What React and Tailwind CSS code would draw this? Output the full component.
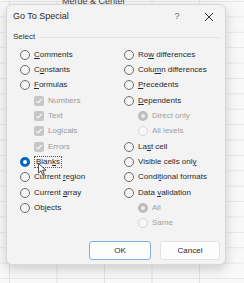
import React from "react";

const Radio = ({ state = "off" }) => {
  if (state === "on")
    return <span className="w-[10px] h-[10px] rounded-full border-[3px] border-[#0067c0] bg-white shrink-0" />;
  if (state === "disabledOn")
    return <span className="w-[10px] h-[10px] rounded-full border-[3px] border-[#bdbdbd] bg-[#ececec] shrink-0" />;
  if (state === "disabledOff")
    return <span className="w-[10px] h-[10px] rounded-full border border-[#d6d6d6] bg-[#f7f7f7] shrink-0" />;
  return <span className="w-[10px] h-[10px] rounded-full border border-[#6b6b6b] bg-[#f6f6f6] shrink-0" />;
};

const Check = () => (
  <span className="w-[10px] h-[10px] rounded-[2px] bg-[#c6c6c6] flex items-center justify-center shrink-0">
    <svg width="8" height="8" viewBox="0 0 8 8">
      <path d="M1.5 4.2 L3.2 5.8 L6.6 2.2" fill="none" stroke="#fff" strokeWidth="1.1" />
    </svg>
  </span>
);

const L = ({ pre, k, post }) => (
  <span>
    {pre}
    <u className="underline-offset-1">{k}</u>
    {post}
  </span>
);

const Row = ({ children, indent = false }) => (
  <div className={`h-[15.35px] flex items-center gap-[4px] ${indent ? "pl-[14px]" : ""}`}>{children}</div>
);

export default function App() {
  return (
    <div
      className="w-[244px] h-[283px] overflow-hidden bg-[#f8f8f8] text-[#2a2a2a] relative"
      style={{ fontFamily: '"Liberation Sans", "Noto Sans", sans-serif' }}
    >
      {/* sheet grid behind the dialog */}
      <div className="absolute inset-0 bg-[linear-gradient(to_right,#e2e2e2_1px,transparent_1px),linear-gradient(to_bottom,#e6e6ee_1px,transparent_1px)] bg-[size:47.5px_15.4px] bg-[position:9px_1px]" />
      <div className="absolute top-[-5px] left-[62px] text-[9px] text-[#444]">Merge &amp; Center</div>

      <div className="absolute left-[6px] top-[4px] w-[220px] h-[261px] bg-[#f3f3f3] rounded-[6px] border border-[#d8d8d8] shadow-[0_4px_12px_rgba(0,0,0,0.18)] flex flex-col text-[8px]">
        <div className="h-[22px] flex items-center pl-[6px] pr-[11px] pt-[1px]">
          <span className="text-[9px] flex-1">Go To Special</span>
          <span className="text-[9px] text-[#666] w-[20px] text-center mr-[17px]">?</span>
          <svg width="10" height="10" viewBox="0 0 10 10">
            <path d="M1 1 L9 9 M9 1 L1 9" stroke="#333" strokeWidth="1" />
          </svg>
        </div>
        <div className="flex items-center pl-[6px] pr-[5px] mt-[4px] h-[12px]">
          <span className="text-[#333]">Select</span>
          <span className="flex-1 h-px bg-[#e4e4e4] ml-[3px]" />
        </div>
        <div className="grid grid-cols-[104px_1fr] pl-[13px] mt-[4px]">
          <div>
            <Row><Radio /><L k="C" post="omments" /></Row>
            <Row><Radio /><L pre="C" k="o" post="nstants" /></Row>
            <Row><Radio /><L k="F" post="ormulas" /></Row>
            <div className="pl-[14px] text-[#9a9a9a]">
              <Row><Check /><span>Numbers</span></Row>
              <Row><Check /><span>Text</span></Row>
              <Row><Check /><span>Logicals</span></Row>
              <Row><Check /><span>Errors</span></Row>
            </div>
            <Row>
              <Radio state="on" />
              <span className="relative border border-dotted border-[#555] px-[1px] leading-[10px]">
                Blan<u>k</u>s
                <svg className="absolute left-[3px] top-[6px]" width="9" height="13" viewBox="0 0 9 13">
                  <path d="M0.5 0.5 L0.5 10 L3 7.8 L4.8 12 L6.3 11.3 L4.6 7.3 L8 7.3 Z" fill="#fff" stroke="#222" strokeWidth="0.8" />
                </svg>
              </span>
            </Row>
            <Row><Radio /><L pre="Current " k="r" post="egion" /></Row>
            <Row><Radio /><L pre="Current " k="a" post="rray" /></Row>
            <Row><Radio /><L pre="Ob" k="j" post="ects" /></Row>
          </div>
          <div>
            <Row><Radio /><L pre="Ro" k="w" post=" differences" /></Row>
            <Row><Radio /><L pre="Colu" k="m" post="n differences" /></Row>
            <Row><Radio /><L k="P" post="recedents" /></Row>
            <Row><Radio /><L k="D" post="ependents" /></Row>
            <div className="text-[#a0a0a0]">
              <Row indent><Radio state="disabledOn" /><span>Direct only</span></Row>
              <Row indent><Radio state="disabledOff" /><span>All levels</span></Row>
            </div>
            <Row><Radio /><L pre="La" k="s" post="t cell" /></Row>
            <Row><Radio /><L pre="Visible cells onl" k="y" /></Row>
            <Row><Radio /><L pre="Condi" k="t" post="ional formats" /></Row>
            <Row><Radio /><L pre="Data " k="v" post="alidation" /></Row>
            <div className="text-[#a0a0a0]">
              <Row indent><Radio state="disabledOn" /><span>All</span></Row>
              <Row indent><Radio state="disabledOff" /><span>Same</span></Row>
            </div>
          </div>
        </div>
        <div className="flex justify-end gap-[9px] pr-[5px] mt-auto mb-[4px]">
          <button className="w-[62px] h-[19px] rounded-[3px] bg-[#fdfdfd] border border-[#7fb1de] text-[8px]">OK</button>
          <button className="w-[60px] h-[19px] rounded-[3px] bg-[#fdfdfd] border border-[#e2e2e2] text-[8px]">Cancel</button>
        </div>
      </div>
    </div>
  );
}
